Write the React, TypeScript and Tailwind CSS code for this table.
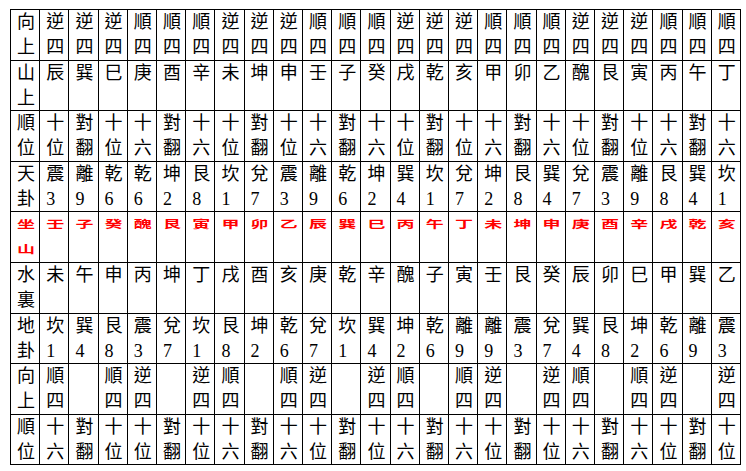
const rows: { head: string; cells: string; red?: boolean }[] = [
  {
    head: "向上",
    cells:
      "逆四 逆四 逆四 順四 順四 順四 逆四 逆四 逆四 順四 順四 順四 逆四 逆四 逆四 順四 順四 順四 逆四 逆四 逆四 順四 順四 順四",
  },
  {
    head: "山上",
    cells: "辰 巽 巳 庚 酉 辛 未 坤 申 壬 子 癸 戌 乾 亥 甲 卯 乙 醜 艮 寅 丙 午 丁",
  },
  {
    head: "順位",
    cells:
      "十位 對翻 十位 十六 對翻 十六 十位 對翻 十位 十六 對翻 十六 十位 對翻 十位 十六 對翻 十六 十位 對翻 十位 十六 對翻 十六",
  },
  {
    head: "天卦",
    cells:
      "震3 離9 乾6 乾6 坤2 艮8 坎1 兌7 震3 離9 乾6 坤2 巽4 坎1 兌7 坤2 艮8 巽4 兌7 震3 離9 艮8 巽4 坎1",
  },
  {
    head: "坐山",
    cells: "壬 子 癸 醜 艮 寅 甲 卯 乙 辰 巽 巳 丙 午 丁 未 坤 申 庚 酉 辛 戌 乾 亥",
    red: true,
  },
  {
    head: "水裏",
    cells: "未 午 申 丙 坤 丁 戌 酉 亥 庚 乾 辛 醜 子 寅 壬 艮 癸 辰 卯 巳 甲 巽 乙",
  },
  {
    head: "地卦",
    cells:
      "坎1 巽4 艮8 震3 兌7 坎1 艮8 坤2 乾6 兌7 坎1 巽4 坤2 乾6 離9 離9 震3 兌7 巽4 艮8 坤2 乾6 離9 震3",
  },
  {
    head: "向上",
    cells:
      "順四 - 順四 逆四 - 逆四 順四 - 順四 逆四 - 逆四 順四 - 順四 逆四 - 逆四 順四 - 順四 逆四 - 逆四",
  },
  {
    head: "順位",
    cells:
      "十六 對翻 十位 十位 對翻 十位 十六 對翻 十六 十位 對翻 十位 十六 對翻 十六 十位 對翻 十位 十六 對翻 十六 十位 對翻 十位",
  },
];

function Cell({ text, red }: { text: string; red?: boolean }) {
  const lines = text === "-" ? [] : Array.from(text);
  return (
    <div className="bg-white pl-[6px] text-[18px] leading-[25px] overflow-hidden">
      {lines.map((ch, i) =>
        red ? (
          <div key={i} className="h-[25px]">
            <span className="inline-block scale-y-[0.6] font-bold text-[#ff0000]">{ch}</span>
          </div>
        ) : (
          <div key={i} className="h-[25px]">
            {ch}
          </div>
        )
      )}
    </div>
  );
}

export default function App() {
  return (
    <div
      className="min-h-[471px] bg-white pl-[10px] pt-[9px] text-black"
      style={{ fontFamily: '"Liberation Serif", "Noto Sans CJK TC", serif' }}
    >
      <div className="grid w-[731px] grid-cols-[repeat(25,minmax(0,1fr))] grid-rows-[repeat(9,49.6px)] gap-px bg-black p-px">
        {rows.map((row, r) => [
          <Cell key={`h${r}`} text={row.head} red={row.red} />,
          ...row.cells.split(" ").map((c, i) => <Cell key={`${r}-${i}`} text={c} red={row.red} />),
        ])}
      </div>
    </div>
  );
}
